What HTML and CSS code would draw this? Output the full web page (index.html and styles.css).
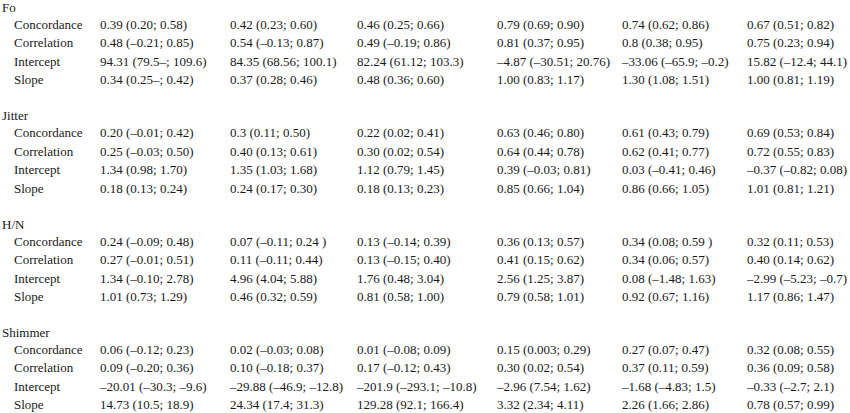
FILE: index.html
```html
<!DOCTYPE html>
<html>
<head>
<meta charset="utf-8">
<link rel="stylesheet" href="styles.css">
</head>
<body>
<div class="table">
  <section class="group">
    <div class="title">Fo</div>
    <div class="grid">
      <div class="lab">Concordance</div><div>0.39 (0.20; 0.58)</div><div>0.42 (0.23; 0.60)</div><div>0.46 (0.25; 0.66)</div><div>0.79 (0.69; 0.90)</div><div>0.74 (0.62; 0.86)</div><div>0.67 (0.51; 0.82)</div>
      <div class="lab">Correlation</div><div>0.48 (–0.21; 0.85)</div><div>0.54 (–0.13; 0.87)</div><div>0.49 (–0.19; 0.86)</div><div>0.81 (0.37; 0.95)</div><div>0.8 (0.38; 0.95)</div><div>0.75 (0.23; 0.94)</div>
      <div class="lab">Intercept</div><div>94.31 (79.5–; 109.6)</div><div>84.35 (68.56; 100.1)</div><div>82.24 (61.12; 103.3)</div><div>–4.87 (–30.51; 20.76)</div><div>–33.06 (–65.9; –0.2)</div><div>15.82 (–12.4; 44.1)</div>
      <div class="lab">Slope</div><div>0.34 (0.25–; 0.42)</div><div>0.37 (0.28; 0.46)</div><div>0.48 (0.36; 0.60)</div><div>1.00 (0.83; 1.17)</div><div>1.30 (1.08; 1.51)</div><div>1.00 (0.81; 1.19)</div>
    </div>
  </section>
  <section class="group">
    <div class="title">Jitter</div>
    <div class="grid">
      <div class="lab">Concordance</div><div>0.20 (–0.01; 0.42)</div><div>0.3 (0.11; 0.50)</div><div>0.22 (0.02; 0.41)</div><div>0.63 (0.46; 0.80)</div><div>0.61 (0.43; 0.79)</div><div>0.69 (0.53; 0.84)</div>
      <div class="lab">Correlation</div><div>0.25 (–0.03; 0.50)</div><div>0.40 (0.13; 0.61)</div><div>0.30 (0.02; 0.54)</div><div>0.64 (0.44; 0.78)</div><div>0.62 (0.41; 0.77)</div><div>0.72 (0.55; 0.83)</div>
      <div class="lab">Intercept</div><div>1.34 (0.98; 1.70)</div><div>1.35 (1.03; 1.68)</div><div>1.12 (0.79; 1.45)</div><div>0.39 (–0.03; 0.81)</div><div>0.03 (–0.41; 0.46)</div><div>–0.37 (–0.82; 0.08)</div>
      <div class="lab">Slope</div><div>0.18 (0.13; 0.24)</div><div>0.24 (0.17; 0.30)</div><div>0.18 (0.13; 0.23)</div><div>0.85 (0.66; 1.04)</div><div>0.86 (0.66; 1.05)</div><div>1.01 (0.81; 1.21)</div>
    </div>
  </section>
  <section class="group">
    <div class="title">H/N</div>
    <div class="grid">
      <div class="lab">Concordance</div><div>0.24 (–0.09; 0.48)</div><div>0.07 (–0.11; 0.24 )</div><div>0.13 (–0.14; 0.39)</div><div>0.36 (0.13; 0.57)</div><div>0.34 (0.08; 0.59 )</div><div>0.32 (0.11; 0.53)</div>
      <div class="lab">Correlation</div><div>0.27 (–0.01; 0.51)</div><div>0.11 (–0.11; 0.44)</div><div>0.13 (–0.15; 0.40)</div><div>0.41 (0.15; 0.62)</div><div>0.34 (0.06; 0.57)</div><div>0.40 (0.14; 0.62)</div>
      <div class="lab">Intercept</div><div>1.34 (–0.10; 2.78)</div><div>4.96 (4.04; 5.88)</div><div>1.76 (0.48; 3.04)</div><div>2.56 (1.25; 3.87)</div><div>0.08 (–1.48; 1.63)</div><div>–2.99 (–5.23; –0.7)</div>
      <div class="lab">Slope</div><div>1.01 (0.73; 1.29)</div><div>0.46 (0.32; 0.59)</div><div>0.81 (0.58; 1.00)</div><div>0.79 (0.58; 1.01)</div><div>0.92 (0.67; 1.16)</div><div>1.17 (0.86; 1.47)</div>
    </div>
  </section>
  <section class="group">
    <div class="title">Shimmer</div>
    <div class="grid">
      <div class="lab">Concordance</div><div>0.06 (–0.12; 0.23)</div><div>0.02 (–0.03; 0.08)</div><div>0.01 (–0.08; 0.09)</div><div>0.15 (0.003; 0.29)</div><div>0.27 (0.07; 0.47)</div><div>0.32 (0.08; 0.55)</div>
      <div class="lab">Correlation</div><div>0.09 (–0.20; 0.36)</div><div>0.10 (–0.18; 0.37)</div><div>0.17 (–0.12; 0.43)</div><div>0.30 (0.02; 0.54)</div><div>0.37 (0.11; 0.59)</div><div>0.36 (0.09; 0.58)</div>
      <div class="lab">Intercept</div><div>–20.01 (–30.3; –9.6)</div><div>–29.88 (–46.9; –12.8)</div><div>–201.9 (–293.1; –10.8)</div><div>–2.96 (7.54; 1.62)</div><div>–1.68 (–4.83; 1.5)</div><div>–0.33 (–2.7; 2.1)</div>
      <div class="lab">Slope</div><div>14.73 (10.5; 18.9)</div><div>24.34 (17.4; 31.3)</div><div>129.28 (92.1; 166.4)</div><div>3.32 (2.34; 4.11)</div><div>2.26 (1.66; 2.86)</div><div>0.78 (0.57; 0.99)</div>
    </div>
  </section>
</div>
</body>
</html>
```

FILE: styles.css
```css
html, body {
  margin: 0;
  padding: 0;
  background: #ffffff;
}
body {
  font-family: "Liberation Serif", "Times New Roman", serif;
  font-size: 13px;
  line-height: 18.5px;
  color: #1a1a1a;
}
.table {
  display: flex;
  flex-direction: column;
  gap: 19.4px;
  padding-top: 1px;
}
.title {
  padding-left: 2px;
  line-height: 14.9px;
}
.grid {
  display: grid;
  grid-template-columns: 86px 130px 127px 140px 125px 125px 1fr;
  padding-left: 14px;
  white-space: nowrap;
}
```
